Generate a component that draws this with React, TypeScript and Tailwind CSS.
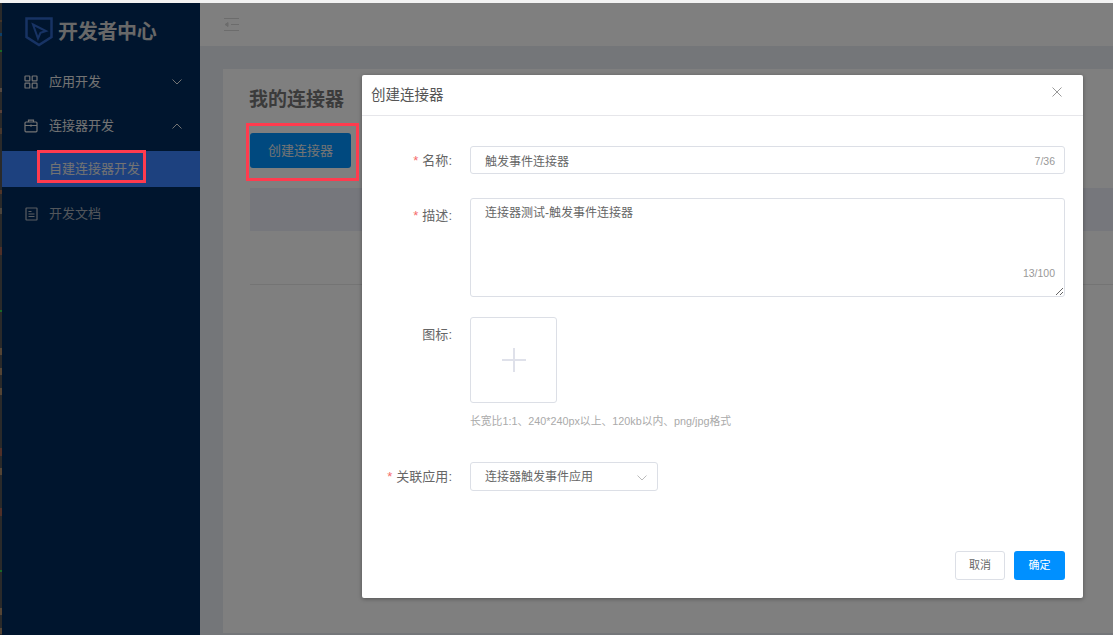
import React from "react";

const specks: [number, number, string][] = [
  [20, 2, "#8a6a50"], [33, 3, "#1a7fd0"], [50, 2, "#35d04a"], [88, 4, "#a89080"], [110, 3, "#b08070"],
  [128, 6, "#90705a"], [190, 4, "#a06a50"], [208, 6, "#998877"], [247, 8, "#a06050"], [310, 2, "#35d04a"],
  [348, 7, "#a88868"], [368, 7, "#a88868"], [388, 7, "#a88868"], [448, 8, "#a06050"], [468, 7, "#a88868"],
  [508, 8, "#a06050"], [570, 2, "#35d04a"], [608, 7, "#a88868"], [628, 6, "#a88868"],
];

function Star() {
  return <span className="mr-1 text-[13px] text-[#f56c6c]">*</span>;
}

function MenuItem({ icon, label, chevron, dim, className }: { icon: React.ReactNode; label: string; chevron?: "up" | "down"; dim?: boolean; className?: string }) {
  return (
    <div className={`flex h-[43px] items-center pl-[21px] pr-[18px] text-[13px] ${dim ? "text-[#a4acb6]" : "text-[#e6e6e6]"} ${className ?? ""}`}>
      <span className="mr-[10px] flex w-[16px] justify-center">{icon}</span>
      <span className="flex-1">{label}</span>
      {chevron && (
        <svg width="10" height="6" viewBox="0 0 10 6" fill="none" stroke="#e8e8e8" strokeWidth="1">
          <path d={chevron === "down" ? "M.5.5 5 5 9.500.5" : "M.5 5.500 5 1l4.500 4.500"} />
        </svg>
      )}
    </div>
  );
}

function Field({ label, required, tall, children, className }: { label: string; required?: boolean; tall?: boolean; children: React.ReactNode; className?: string }) {
  return (
    <div className={`flex items-start ${className ?? ""}`}>
      <label className={`flex w-[90px] shrink-0 items-center justify-end text-[13px] text-[#666] ${tall ? "h-[35px]" : "h-[29px]"}`}>
        {required && <Star />}
        {label}:
      </label>
      <div className="ml-[18px] flex-1">{children}</div>
    </div>
  );
}

export default function App() {
  return (
    <div className="relative flex h-[635px] w-[1113px] flex-col overflow-hidden bg-white font-['Liberation_Sans','Noto_Sans_CJK_SC',sans-serif]">
      <div className="h-[3px] shrink-0 bg-[#f2f2f2]" />
      <div className="relative flex min-h-0 flex-1">
        <div className="relative w-[2px] shrink-0 bg-[#555]">
          {specks.map(([y, h, c], i) => (
            <div key={i} className="absolute left-0 w-[2px]" style={{ top: y - 3, height: h, backgroundColor: c }} />
          ))}
        </div>
        <aside className="flex w-[198px] shrink-0 flex-col bg-[#002a5c]">
          <div className="flex h-[57px] items-center pl-[23px]">
            <svg width="28" height="30" viewBox="0 0 28 30" fill="none" className="mr-[5px]">
              <path d="M1.500 1.500h25v18.500L14 28 1.500 20z" stroke="#2f66c8" strokeWidth="2.500" />
              <path d="M8 7.500 21 14l-5.500 1.800L13 21.500z" stroke="#2f66c8" strokeWidth="2" />
            </svg>
            <span className="text-[20px] font-bold tracking-[-0.3px] text-[#d0d0d0]">开发者中心</span>
          </div>
          <MenuItem
            label="应用开发"
            chevron="down"
            icon={
              <svg width="14" height="14" viewBox="0 0 14 14" fill="none" stroke="#e8e8e8" strokeWidth="1.200">
                <rect x="1" y="1" width="4.800" height="4.800" rx=".6" />
                <rect x="8.200" y="1" width="4.800" height="4.800" rx=".6" />
                <rect x="1" y="8.200" width="4.800" height="4.800" rx=".6" />
                <rect x="8.200" y="8.200" width="4.800" height="4.800" rx=".6" />
              </svg>
            }
          />
          <MenuItem
            label="连接器开发"
            chevron="up"
            className="mt-px"
            icon={
              <svg width="14" height="14" viewBox="0 0 14 14" fill="none" stroke="#e8e8e8" strokeWidth="1.200">
                <rect x="1" y="3" width="12" height="9.800" rx="1" />
                <path d="M4.500 3V1.200h5V3M1 6.500h12M7 5.500v2.200" />
              </svg>
            }
          />
          <div className="mt-[4px] flex h-[36px] items-center bg-[#3a83ff] pl-[47px] text-[13px] text-[#e6e6e6]">自建连接器开发</div>
          <div className="h-[5px]" />
          <MenuItem
            label="开发文档"
            dim
            icon={
              <svg width="13" height="14" viewBox="0 0 13 14" fill="none" stroke="#b4bcc6" strokeWidth="1.200">
                <rect x="1" y="1" width="11" height="12" rx=".5" />
                <path d="M3.500 4.500h3M3.500 7h6M3.500 9.500h6" />
              </svg>
            }
          />
        </aside>
        <main className="flex min-w-0 flex-1 flex-col bg-[#e9ecf2]">
          <header className="flex h-[43px] shrink-0 items-center bg-white pl-[24px]">
            <svg width="15" height="13" viewBox="0 0 15 13" fill="none" stroke="#d8d8d8" strokeWidth="1">
              <path d="M0 .5h15M0 12.500h15M7 6.500h8" />
              <path d="M1 6.500 4 4.500v4z" fill="#d8d8d8" />
            </svg>
          </header>
          <section className="mb-[2px] ml-[23px] mt-[23px] flex-1 bg-white pl-[27px] pt-[19px]">
            <h1 className="-ml-px text-[19px] font-bold leading-[24px] text-[#777]">我的连接器</h1>
            <button className="mt-[21px] flex h-[35px] w-[101px] items-center justify-center rounded-[3px] bg-[#0092ff] text-[13px] text-[#e8e8e8]">
              创建连接器
            </button>
            <div className="mt-[20px] h-[43px] bg-[#eceef8]" />
            <div className="h-[54px] border-b border-[#e8e8e8]" />
          </section>
        </main>
        <div className="absolute inset-0 bg-black/50">
          <div className="absolute left-[362px] top-[72px] flex h-[523px] w-[721px] flex-col rounded-[2px] bg-white shadow-[0_1px_4px_rgba(0,0,0,0.35)]">
            <div className="flex h-[41px] items-center justify-between border-b border-[#e6e6ea] pl-[9px] pr-[21px] text-[14.500px] text-[#555]">
              <span className="mt-[1px]">创建连接器</span>
              <svg width="10" height="10" viewBox="0 0 10 10" stroke="#999" strokeWidth="1" className="mb-[7px]">
                <path d="M.5.5l9 9M9.500.5l-9 9" />
              </svg>
            </div>
            <div className="flex flex-1 flex-col pr-[18px] pt-[30px]">
              <Field label="名称" required>
                <div className="relative">
                  <input
                    readOnly
                    value="触发事件连接器"
                    className="h-[28px] w-full rounded-[3px] border border-[#dcdfe6] pl-[14px] pr-[40px] text-[12px] text-[#666] outline-none"
                  />
                  <span className="absolute right-[10px] top-[8px] text-[10.500px] text-[#999]">7/36</span>
                </div>
              </Field>
              <Field label="描述" required tall className="mt-[23px]">
                <div className="relative flex">
                  <textarea
                    readOnly
                    value="连接器测试-触发事件连接器"
                    className="h-[99px] w-full rounded-[3px] border border-[#dcdfe6] px-[14px] py-[6px] text-[12px] leading-[16px] text-[#666] outline-none"
                  />
                  <span className="absolute bottom-[15px] right-[10px] text-[10.500px] font-medium text-[#999]">13/100</span>
                </div>
              </Field>
              <Field label="图标" tall className="mt-[20px]">
                <div className="flex h-[86px] w-[87px] items-center justify-center rounded-[3px] border border-[#dcdfe6]">
                  <svg width="24" height="24" viewBox="0 0 24 24" stroke="#dfe1ea" strokeWidth="2">
                    <path d="M12 0v24M0 12h24" />
                  </svg>
                </div>
                <p className="mt-[11px] text-[10.800px] leading-[14px] text-[#aaa]">长宽比1:1、240*240px以上、120kb以内、png/jpg格式</p>
              </Field>
              <Field label="关联应用" required className="mt-[34px]">
                <div className="flex h-[29px] w-[188px] items-center justify-between rounded-[3px] border border-[#dcdfe6] pl-[14px] pr-[10px] text-[12px] text-[#666]">
                  <span>连接器触发事件应用</span>
                  <svg width="10" height="6" viewBox="0 0 10 6" fill="none" stroke="#bbb" strokeWidth="1" className="mt-[3px]">
                    <path d="M.5.5 5 5 9.500.5" />
                  </svg>
                </div>
              </Field>
              <div className="mb-[18px] mt-auto flex justify-end gap-[9px]">
                <button className="h-[29px] w-[50px] rounded-[3px] border border-[#dcdfe6] bg-white text-[11px] text-[#666]">取消</button>
                <button className="h-[29px] w-[51px] rounded-[3px] bg-[#0090ff] text-[11px] text-white">确定</button>
              </div>
            </div>
          </div>
        </div>
      </div>
      <div className="pointer-events-none absolute left-[37px] top-[150px] h-[33px] w-[109px] border-[3px] border-[#ff3b4e]" />
      <div className="pointer-events-none absolute left-[246px] top-[123px] h-[58px] w-[113px] border-[3px] border-[#ff3b4e]" />
    </div>
  );
}
